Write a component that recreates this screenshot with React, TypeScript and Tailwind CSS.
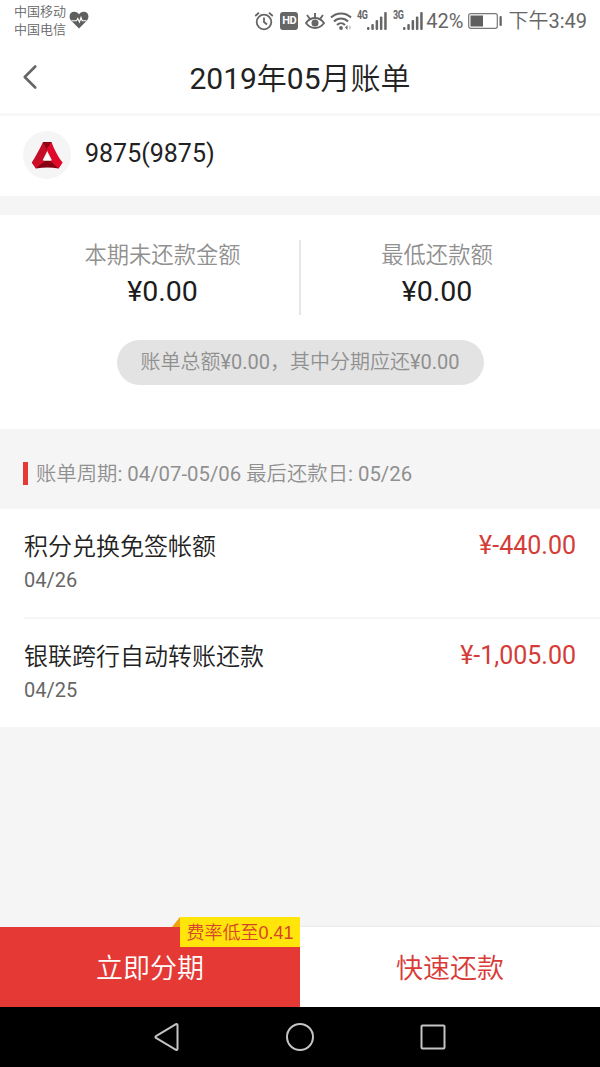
import { ChevronLeft } from 'lucide-react';

interface Transaction {
  title: string;
  date: string;
  amount: string;
}

const transactions: Transaction[] = [
  { title: '积分兑换免签帐额', date: '04/26', amount: '¥-440.00' },
  { title: '银联跨行自动转账还款', date: '04/25', amount: '¥-1,005.00' },
];

function HeartIcon() {
  return (
    <svg width="20" height="18" viewBox="0 0 20 18">
      <path d="M10 17.4 2 9.4C-1 5.500 1 .8 5.200.8 7.400.8 9 1.900 10 3.500 11 1.900 12.600.8 14.800.8 19 .8 21 5.500 18 9.400Z" fill="#5f5f5f" />
      <path d="M2.500 9.800h5l1.300-2.300 1.700 3.500 1.500-4.500 1.200 3.300h4.300" fill="none" stroke="#fff" strokeWidth="1.100" />
    </svg>
  );
}

function AlarmIcon() {
  return (
    <svg width="20" height="20" viewBox="0 0 20 20" fill="none" stroke="#666" strokeWidth="1.800">
      <circle cx="10" cy="11" r="7.300" />
      <path d="M10 6.500V11l3 2.500M1.200 5 5 1.800M18.800 5 15 1.800" />
    </svg>
  );
}

function EyeIcon() {
  return (
    <svg width="20" height="20" viewBox="0 0 20 20" fill="none" stroke="#666" strokeWidth="1.900">
      <path d="M1 12c2.500-3.500 5.500-5 9-5s6.500 1.500 9 5c-2.500 3.500-5.500 5-9 5s-6.500-1.500-9-5Z" />
      <path d="M10 7V2M5 8 2 4M15 8l3-4" />
      <circle cx="10" cy="12" r="3.500" fill="#666" stroke="none" />
    </svg>
  );
}

function WifiIcon() {
  return (
    <svg width="22" height="20" viewBox="0 0 22 20" fill="none" stroke="#666" strokeWidth="2">
      <path d="M1 6.500c5.500-5.500 14.500-5.500 20 0M4 10.500c4-4 10-4 14 0M7 14c2.300-2.300 5.700-2.300 8 0" />
      <circle cx="11" cy="17" r="1.900" fill="#666" stroke="none" />
      <path d="M17.500 14v5L15 16.500Z" fill="#666" stroke="none" />
      <path d="m19 14 2.500 2.500L19 19Z" fill="#ccc" stroke="none" />
    </svg>
  );
}

function SignalIcon({ label }: { label: string }) {
  return (
    <div className="flex items-start">
      <span className="w-[10px] origin-left scale-x-75 text-[12px] leading-[9px] font-bold tracking-[-0.5px] text-[#666]">{label}</span>
      <svg width="20" height="20" viewBox="0 0 20 20" fill="#666">
        <rect x="0" y="16" width="2.500" height="3" rx="1" />
        <rect x="4.300" y="13" width="2.500" height="6" rx="1" />
        <rect x="8.600" y="9" width="2.500" height="10" rx="1" />
        <rect x="12.900" y="5.500" width="2.500" height="13.500" rx="1" />
        <rect x="17.200" y="1" width="2.500" height="18" rx="1" />
      </svg>
    </div>
  );
}

function BatteryIcon() {
  return (
    <svg width="34" height="16" viewBox="0 0 34 16">
      <rect x=".7" y=".7" width="28.600" height="14.600" rx="2" fill="none" stroke="#777" strokeWidth="1.200" />
      <rect x="2.500" y="2.500" width="12.500" height="11" fill="#5f5f5f" />
      <rect x="31.500" y="3" width="2.300" height="10" rx="1" fill="#666" />
    </svg>
  );
}

function BankLogo() {
  return (
    <div className="flex h-12 w-12 items-center justify-center rounded-full bg-[#f5f5f5]">
      <svg width="32" height="28" viewBox="0 0 32 28">
        <path d="M12 1h8.500L17 8.500 11.500 19.500 5 27.500.8 21.500C5 15 8 9 12 1Z" fill="#c50f28" />
        <path d="M12 1h8.500L16 9Z" fill="#8c0014" />
        <path d="M15.500 8.500 20.500 1c3 8 6 14 11 20.500l-4 6-6.500-8Z" fill="#e00a2b" />
        <path d="M8 19.500h16l3.500 8c-7-1.300-15-1.300-22.500 0Z" fill="#860012" />
        <path d="M.8 21.500 8 18.500l5.500 1.500L5 27.500Z" fill="#cf0d29" />
        <path d="m24 18.500 7.500 3-4 6-8-7.500Z" fill="#e00a2b" />
        <path d="m16.300 12 4 7.500h-8Z" fill="#fff" />
      </svg>
    </div>
  );
}

function StatusBar() {
  return (
    <div className="flex h-[41px] justify-between pl-[14px] pr-[13px] text-[#666]">
      <div className="flex items-start gap-[3px]">
        <div className="pt-[3px] text-[13px] leading-[18px]">
          <p>中国移动</p>
          <p>中国电信</p>
        </div>
        <div className="pt-[11px]">
          <HeartIcon />
        </div>
      </div>
      <div className="flex h-[41px] items-center">
        <AlarmIcon />
        <span className="ml-[6px] flex h-[18px] w-[18px] items-center justify-center rounded-[3px] bg-[#666] text-[11px] leading-none font-bold tracking-[-0.5px] text-white">
          HD
        </span>
        <span className="ml-[7px]"><EyeIcon /></span>
        <span className="ml-[5px]"><WifiIcon /></span>
        <span className="ml-[5px]"><SignalIcon label="4G" /></span>
        <span className="ml-[6px]"><SignalIcon label="3G" /></span>
        <span className="ml-[3px] text-[20px]">42%</span>
        <span className="ml-[5px]"><BatteryIcon /></span>
        <span className="ml-[6px] pt-px text-[20px] whitespace-nowrap">下午3:49</span>
      </div>
    </div>
  );
}

function SummaryItem({ label, value }: { label: string; value: string }) {
  return (
    <div className="flex flex-col items-center">
      <p className="pt-px text-[22.300px] leading-[30px] text-[#909090]">{label}</p>
      <p className="mt-[4px] text-[28.500px] leading-[36px] text-[#1c1c1c]">{value}</p>
    </div>
  );
}

export default function App() {
  return (
    <div className="flex h-[1067px] w-[600px] flex-col overflow-hidden bg-[#f5f5f5] font-['Roboto','Noto_Sans_CJK_SC_DemiLight','Noto_Sans_CJK_SC_Light','Noto_Sans_CJK_SC',sans-serif]">
      <div className="bg-white">
        <StatusBar />

        {/* Header */}
        <header className="grid h-[75px] grid-cols-[60px_1fr_60px] items-center border-b-[3px] border-[#f8f8f8]">
          <button className="pl-[9px]">
            <ChevronLeft className="h-[42px] w-[42px] text-[#666]" strokeWidth={1.5} />
          </button>
          <h1 className="pt-[3px] text-center text-[30px] leading-[40px] text-[#222]">2019年05月账单</h1>
        </header>

        {/* Account */}
        <div className="flex h-[80px] items-center gap-[14px] pl-[23px]">
          <div className="pb-[3px]">
            <BankLogo />
          </div>
          <span className="pb-[5px] text-[25px] text-[#222]">9875(9875)</span>
        </div>
      </div>

      {/* Summary */}
      <section className="mt-[19px] flex h-[214px] flex-col items-center bg-white pt-[24px]">
        <div className="grid w-full grid-cols-[299px_2px_299px]">
          <div className="pl-[26px]">
            <SummaryItem label="本期未还款金额" value="¥0.00" />
          </div>
          <div className="mt-[1px] h-[75px] bg-[#e6e6e6]" />
          <div className="pr-[27px]">
            <SummaryItem label="最低还款额" value="¥0.00" />
          </div>
        </div>
        <div className="mt-[25px] flex h-[45px] w-[367px] items-center justify-center rounded-full bg-[#e3e3e3] pb-[2px] text-[20px] whitespace-nowrap text-[#909090]">
          账单总额¥0.00，其中分期应还¥0.00
        </div>
      </section>

      {/* Billing period */}
      <div className="flex h-[80px] items-center gap-[8px] pt-[9px] pl-[23px]">
        <span className="h-[23px] w-[5px] bg-[#e53935]" />
        <span className="text-[20.350px] leading-[28px] text-[#909090]">账单周期: 04/07-05/06 最后还款日: 05/26</span>
      </div>

      {/* Transactions */}
      <ul className="h-[218px] bg-white pl-[24px]">
        {transactions.map((item) => (
          <li
            key={item.date}
            className="flex h-[110px] items-start justify-between border-b-2 border-[#f6f6f6] pt-[20px] pr-[24px] last:h-[108px] last:border-b-0"
          >
            <div>
              <p className="pt-px text-[24px] leading-[34px] text-[#222]">{item.title}</p>
              <p className="mt-[2px] text-[20px] leading-[28px] text-[#666]">{item.date}</p>
            </div>
            <span className="text-[25px] leading-[34px] text-[#d43c38]">{item.amount}</span>
          </li>
        ))}
      </ul>

      {/* Bottom actions */}
      <div className="mt-auto grid h-[80px] grid-cols-2 text-[27px]">
        <button className="relative bg-[#e53935] pt-[5px] text-white">
          立即分期
          <span className="absolute -top-[10px] right-0 flex h-[30px] w-[120px] items-center justify-center bg-[#ffe50a] pt-[2px] font-['Liberation_Sans','Noto_Sans_CJK_SC_DemiLight','Noto_Sans_CJK_SC_Light','Noto_Sans_CJK_SC',sans-serif] text-[18px] text-[#d8432c]">
            费率低至0.41
          </span>
          <svg className="absolute -top-[10px] right-[120px]" width="8" height="10" viewBox="0 0 8 10">
            <path d="M8 0v10H0Z" fill="#f0a30a" />
          </svg>
        </button>
        <button className="bg-white pt-[5px] text-[#d93a36] shadow-[0_-1px_2px_rgba(0,0,0,0.05)]">快速还款</button>
      </div>

      {/* Android navigation */}
      <nav className="flex h-[60px] items-center justify-center gap-[105px] bg-black">
        <svg width="28" height="30" viewBox="0 0 28 30" fill="none" stroke="#c4c4c4" strokeWidth="2">
          <path d="M24.500 3v24a1 1 0 0 1-1.500.8L3 16a1 1 0 0 1 0-1.800L23 2.200a1 1 0 0 1 1.500.8Z" />
        </svg>
        <svg width="28" height="30" viewBox="0 0 28 30" fill="none" stroke="#c4c4c4" strokeWidth="2">
          <circle cx="14" cy="15" r="13" />
        </svg>
        <svg width="28" height="30" viewBox="0 0 28 30" fill="none" stroke="#c4c4c4" strokeWidth="2">
          <rect x="2.500" y="3.500" width="23" height="23" rx="1" />
        </svg>
      </nav>
    </div>
  );
}
